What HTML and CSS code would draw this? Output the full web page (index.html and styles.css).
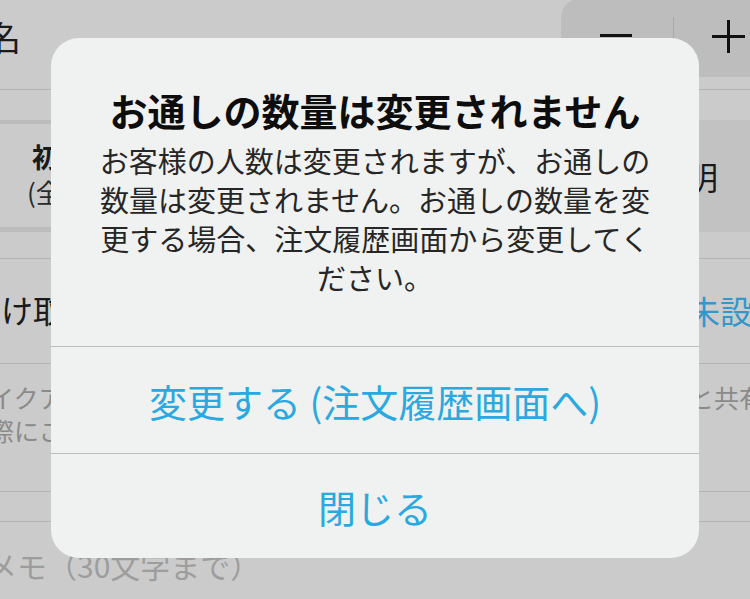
FILE: index.html
```html
<!DOCTYPE html>
<html lang="ja">
<head>
<meta charset="utf-8">
<title>お通しの数量は変更されません</title>
<link rel="stylesheet" href="styles.css">
</head>
<body>
<div class="screen">
  <div class="row row-top">
    <div class="name-label">名</div>
    <div class="stepper">
      <div class="step-btn minus"><span class="minus-bar"></span></div>
      <div class="step-btn plus"><span class="plus-h"></span><span class="plus-v"></span></div>
    </div>
  </div>
  <div class="gap gap-30"></div>
  <div class="segment">
    <div class="seg-left">
      <div class="seg-title">初回</div>
      <div class="seg-sub">(全員)</div>
    </div>
    <div class="seg-right">説明</div>
  </div>
  <div class="gap gap-26 ruled"></div>
  <div class="row row-receive ruled">
    <div class="recv-label">受け取</div>
    <div class="recv-value">未設定</div>
  </div>
  <div class="row row-note ruled">
    <div class="note-left">テイクアウト<br>実際にこ</div>
    <div class="note-right">と共有</div>
  </div>
  <div class="gap gap-29 ruled"></div>
  <div class="memo">メモ（30文字まで）</div>
</div>

<div class="alert">
  <div class="alert-body">
    <div class="alert-title">お通しの数量は変更されません</div>
    <div class="alert-msg">お客様の人数は変更されますが、お通しの<br>数量は変更されません。お通しの数量を変<br>更する場合、注文履歴画面から変更してく<br>ださい。</div>
  </div>
  <div class="alert-btn">変更する (注文履歴画面へ)</div>
  <div class="alert-btn last">閉じる</div>
</div>
</body>
</html>
```
FILE: styles.css
```css
* { box-sizing: border-box; }
html, body {
  margin: 0;
  padding: 0;
  width: 750px;
  height: 599px;
  overflow: hidden;
  background: #cbcbcb;
  font-family: "Noto Sans CJK JP", "Noto Sans", sans-serif;
}
.screen {
  position: relative;
  width: 750px;
  height: 599px;
  display: flex;
  flex-direction: column;
}
.row { display: flex; justify-content: space-between; }
.ruled { border-bottom: 1px solid #b3b3b3; }

.row-top {
  height: 90px;
  border-bottom: 1px solid #b3b3b3;
  align-items: flex-start;
}
.name-label {
  font-size: 34px;
  line-height: 40px;
  margin-top: 17px;
  margin-left: -13px;
  color: #1a1a1a;
}
.stepper {
  display: flex;
  width: 220px;
  height: 79px;
  margin-top: -2px;
  margin-right: -31px;
  background: #bdbdbd;
  border-radius: 20px;
}
.step-btn { position: relative; height: 100%; }
.minus { width: 113px; }
.minus::after {
  content: "";
  position: absolute;
  right: 0;
  top: 19px;
  width: 1px;
  height: 44px;
  background: #a9a9a9;
}
.plus { flex: 1; }
.minus-bar {
  position: absolute;
  left: 39px;
  top: 36px;
  width: 32px;
  height: 3px;
  background: #111;
}
.plus-h, .plus-v { position: absolute; background: #111; }
.plus-h { left: 38px; top: 37px; width: 33px; height: 3px; }
.plus-v { left: 53px; top: 22px; width: 3px; height: 33px; }

.gap-30 { height: 30px; }
.gap-26 { height: 27px; }
.gap-29 { height: 30px; }

.segment {
  display: flex;
  height: 112px;
}
.seg-left {
  flex: 1;
  border-top: 4px solid #bcbcbc;
  border-bottom: 5px solid #bcbcbc;
  padding-top: 16px;
}
.seg-title {
  font-size: 27px;
  font-weight: 700;
  line-height: 34px;
  padding-left: 32px;
  color: #1a1a1a;
}
.seg-sub {
  font-size: 26px;
  line-height: 36px;
  padding-left: 27px;
  color: #2a2a2a;
}
.seg-right {
  width: 120px;
  background: #c2c2c2;
  font-size: 32px;
  line-height: 112px;
  padding-left: 24px;
  color: #1a1a1a;
}

.row-receive {
  height: 105px;
  align-items: center;
}
.recv-label {
  font-size: 32px;
  margin-left: -31px;
  color: #1a1a1a;
  margin-top: -4px;
}
.recv-value {
  font-size: 32px;
  color: #3597c9;
  margin-right: -34px;
  margin-top: -2px;
}

.row-note {
  height: 128px;
  padding-top: 17px;
}
.note-left {
  font-size: 25px;
  line-height: 33px;
  color: #8a8a8a;
  margin-left: -36px;
}
.note-right {
  font-size: 25px;
  line-height: 33px;
  color: #8a8a8a;
  margin-right: -14px;
}
.memo {
  font-size: 30px;
  line-height: 40px;
  margin-top: 23px;
  margin-left: -13px;
  color: #9d9d9d;
}

.alert {
  position: absolute;
  left: 51px;
  top: 38px;
  width: 648px;
  height: 520px;
  border-radius: 28px;
  background: #f0f1f1;
  overflow: hidden;
  display: flex;
  flex-direction: column;
}
.alert-body {
  height: 308px;
  padding-top: 50px;
  text-align: center;
}
.alert-title {
  font-size: 38px;
  font-weight: 700;
  line-height: 44px;
  color: #0d0d0d;
}
.alert-msg {
  margin-top: 9px;
  font-size: 29px;
  line-height: 39px;
  color: #262626;
}
.alert-btn {
  height: 107px;
  border-top: 1px solid #bdbdbd;
  display: flex;
  align-items: center;
  justify-content: center;
  font-size: 38px;
  color: #2aa9e1;
}
.alert-btn.last { height: 105px; }
```
